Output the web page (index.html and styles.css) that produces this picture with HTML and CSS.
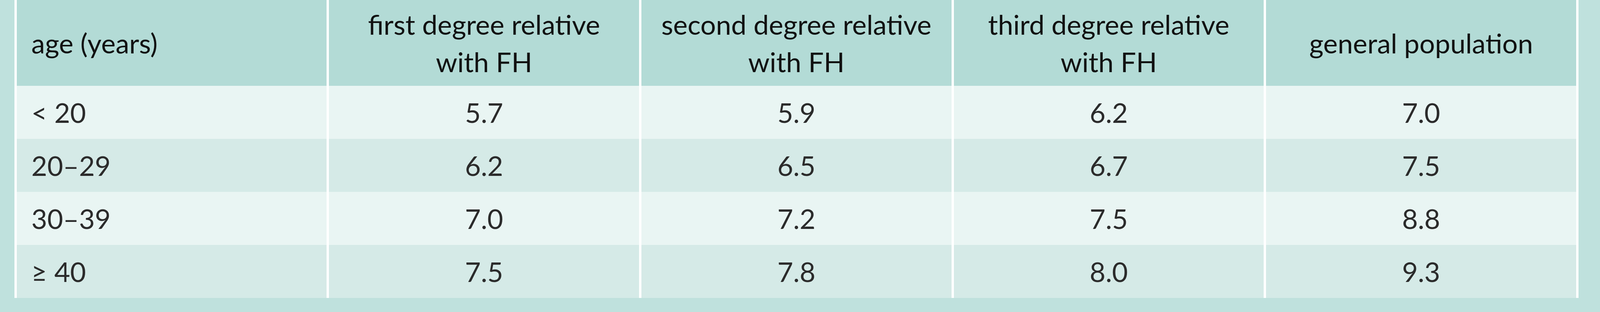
FILE: index.html
```html
<!DOCTYPE html>
<html lang="en">
<head>
<meta charset="utf-8">
<title>Table</title>
<link rel="stylesheet" href="styles.css">
</head>
<body>
<div class="page">
  <table class="data">
    <colgroup>
      <col class="c"><col class="c"><col class="c"><col class="c"><col class="c">
    </colgroup>
    <thead>
      <tr class="head">
        <th class="first">age (years)</th>
        <th>first degree relative<br>with FH</th>
        <th>second degree relative<br>with FH</th>
        <th>third degree relative<br>with FH</th>
        <th>general population</th>
      </tr>
    </thead>
    <tbody>
      <tr class="light">
        <td class="first">&lt; 20</td><td>5.7</td><td>5.9</td><td>6.2</td><td>7.0</td>
      </tr>
      <tr class="dark">
        <td class="first">20–29</td><td>6.2</td><td>6.5</td><td>6.7</td><td>7.5</td>
      </tr>
      <tr class="light">
        <td class="first">30–39</td><td>7.0</td><td>7.2</td><td>7.5</td><td>8.8</td>
      </tr>
      <tr class="dark">
        <td class="first">≥ 40</td><td>7.5</td><td>7.8</td><td>8.0</td><td>9.3</td>
      </tr>
    </tbody>
  </table>
</div>
</body>
</html>
```
FILE: styles.css
```css
html, body {
  margin: 0;
  padding: 0;
  background: #bfe1dd;
}
body {
  height: 800px;
  overflow: hidden;
  font-family: Lato, "Open Sans", sans-serif;
  color: #141414;
}
.page {
  padding-left: 0.896vw;
}
.data {
  width: 97.76vw;
  table-layout: fixed;
  border-collapse: separate;
  border-spacing: 0.153vw 0;
  background: #ffffff;
}
.data th,
.data td {
  padding: 0 0.3vw;
  text-align: center;
  vertical-align: middle;
  font-size: 70px;
  font-weight: 400;
  white-space: nowrap;
}
.data th {
  line-height: 96px;
  color: #111111;
}
.data td {
  line-height: 1;
  color: #2b2b2b;
}
.data .first {
  text-align: left;
  padding-left: 0.92vw;
}
.head {
  height: 220px;
  background: #b3dbd6;
}
.light {
  height: 136px;
  background: #e9f5f3;
}
.dark {
  height: 136px;
  background: #d5eae7;
}
```
